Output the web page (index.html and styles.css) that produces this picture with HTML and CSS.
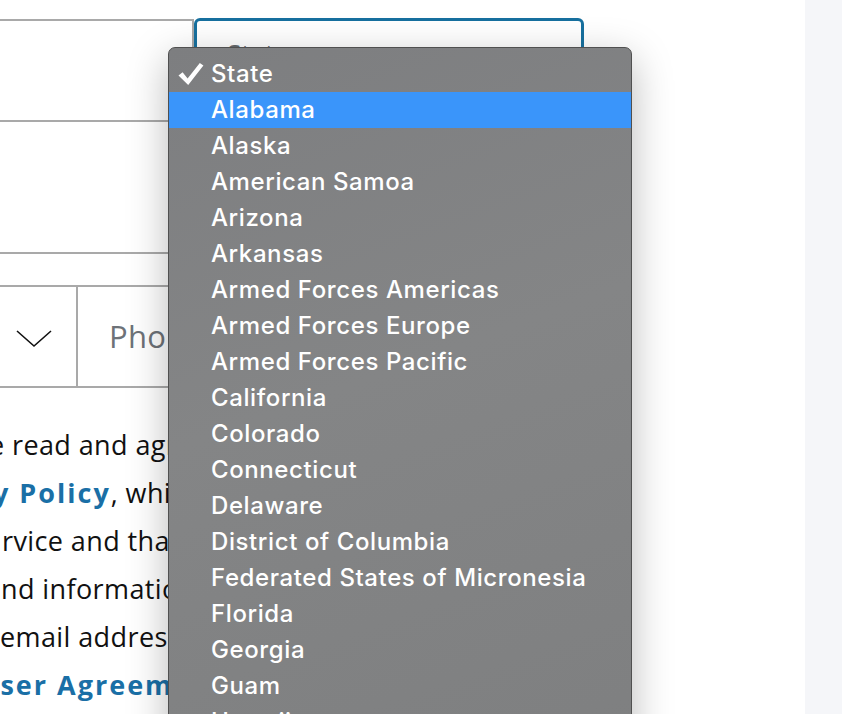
FILE: index.html
```html
<!DOCTYPE html>
<html lang="en">
  <head>
    <title>Create account</title>
    <meta charset="UTF-8" />
    <link rel="stylesheet" href="styles.css">
  </head>
  <body>
    <div class="page">
      <div class="main">
        <form class="signup-form">
          <div class="row">
            <div class="field field-city"></div>
            <div class="field field-state">
              <span class="field-label">State</span>
            </div>
          </div>
          <div class="field field-zip"></div>
          <div class="row row-phone">
            <div class="field field-cc">
              <svg class="chevron" width="36" height="18" viewBox="0 0 36 18">
                <path d="M1 1 L18 16 L35 1" fill="none" stroke="#111" stroke-width="1.6"/>
              </svg>
            </div>
            <div class="field field-phone">
              <span class="placeholder">Phone number</span>
            </div>
          </div>
          <div class="consent">
            <div class="line l1">e read and agree to the Terms of Use and</div>
            <div class="line l2"><a href="#">y Policy</a>, which describes how</div>
            <div class="line l3">rvice and that my personal data</div>
            <div class="line l4">nd information will be processed</div>
            <div class="line l5">email address. See the</div>
            <div class="line l6"><a href="#">User Agreement</a></div>
          </div>
        </form>

        <div class="state-menu">
          <div class="menu-item checked">
            <svg class="check" width="26" height="24" viewBox="0 0 26 24">
              <path d="M0.5 13.5 L4.6 10.2 L9.6 16.4 L21.8 1 L25.4 3.6 L10.2 23 Z" fill="#fff"/>
            </svg>
            State
          </div>
          <div class="menu-item active">Alabama</div>
          <div class="menu-item">Alaska</div>
          <div class="menu-item">American Samoa</div>
          <div class="menu-item">Arizona</div>
          <div class="menu-item">Arkansas</div>
          <div class="menu-item">Armed Forces Americas</div>
          <div class="menu-item">Armed Forces Europe</div>
          <div class="menu-item">Armed Forces Pacific</div>
          <div class="menu-item">California</div>
          <div class="menu-item">Colorado</div>
          <div class="menu-item">Connecticut</div>
          <div class="menu-item">Delaware</div>
          <div class="menu-item">District of Columbia</div>
          <div class="menu-item">Federated States of Micronesia</div>
          <div class="menu-item">Florida</div>
          <div class="menu-item">Georgia</div>
          <div class="menu-item">Guam</div>
          <div class="menu-item">Hawaii</div>
          <div class="menu-item">Idaho</div>
        </div>
      </div>
      <div class="sidebar"></div>
    </div>
  </body>
</html>
```

FILE: styles.css
```css
 body {
  margin: 0;
  overflow: hidden;
  font-family: 'Open Sans', 'Liberation Sans', sans-serif;
  color: #111;
  background: #fff;
 }

 .page {
  display: flex;
  height: 714px;
 }

 .main {
  position: relative;
  flex: 1;
  overflow: hidden;
 }

 .sidebar {
  width: 37px;
  background-color: #f5f6f9;
 }

 .signup-form {
  margin-left: -20px;
  width: 604px;
  padding-top: 18px;
 }

 .row {
  display: flex;
 }

 .field {
  box-sizing: border-box;
  border: 2px solid #a9a9a9;
  background: #fff;
 }

 .field-city {
  width: 214px;
  height: 103px;
  margin-top: 1px;
 }

 .field-state {
  flex: 1;
  height: 104px;
  border: 3px solid #17709f;
  border-radius: 6px;
  padding: 14px 0 0 30px;
 }

 .field-label {
  font-size: 26px;
  color: #666a6e;
 }

 .field-zip {
  height: 136px;
  margin-top: -4px;
 }

 .row-phone {
  margin-top: 31px;
 }

 .field-cc {
  width: 98px;
  height: 103px;
  display: flex;
  align-items: center;
  padding-left: 34px;
 }

 .chevron {
  display: block;
  margin-top: 4px;
 }

 .field-phone {
  flex: 1;
  height: 103px;
  margin-left: -2px;
  padding: 28px 0 0 31px;
 }

 .placeholder {
  font-size: 31px;
  letter-spacing: 0.3px;
  color: #6d7278;
 }

 .consent {
  margin-top: 33px;
  font-size: 27px;
  letter-spacing: 0.4px;
  line-height: 48px;
  white-space: nowrap;
 }

 .consent a {
  color: #1a6fa6;
  font-weight: 700;
  letter-spacing: 2px;
  text-decoration: none;
 }

 .line {
  margin-left: 20px;
 }

 .l1 { text-indent: -11px; }
 .l2 { text-indent: -7px; }
 .l3 { text-indent: 2px; }
 .l4 { text-indent: 1px; }
 .l5 { text-indent: 0; }
 .l6 { text-indent: -22px; }

 .state-menu {
  position: absolute;
  left: 168px;
  top: 47px;
  width: 462px;
  height: 720px;
  padding-top: 8px;
  background: linear-gradient(160deg, #7d7e80 0%, #848586 45%, #7e7f80 100%);
  border: 1px solid #505050;
  border-radius: 7px;
  box-shadow: 0 12px 40px rgba(0, 0, 0, 0.28);
  font-family: 'Inter', 'Liberation Sans', sans-serif;
  font-weight: 500;
  font-size: 24px;
  letter-spacing: 0.6px;
  color: #fff;
 }

 .menu-item {
  position: relative;
  height: 36px;
  line-height: 36px;
  padding-left: 42px;
 }

 .menu-item.active {
  background-color: #3a95fa;
 }

 .check {
  position: absolute;
  left: 9px;
  top: 6px;
 }
```
